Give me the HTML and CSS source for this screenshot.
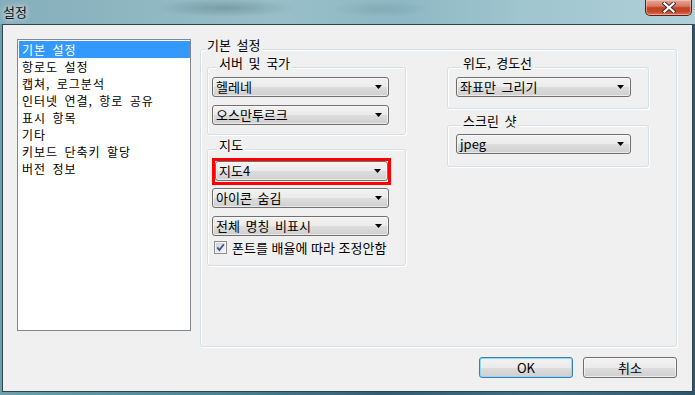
FILE: index.html
```html
<!DOCTYPE html>
<html lang="ko">
<head>
<meta charset="utf-8">
<title>설정</title>
<link rel="stylesheet" href="styles.css">
</head>
<body>
<div class="window">
  <div class="titlebar">
    <span class="title">설정</span>
    <div class="close-btn">
      <svg width="14" height="11" viewBox="0 0 14 11">
        <path d="M2.5 1.5 L11.5 9.5 M11.5 1.5 L2.5 9.5" stroke="#3a2a2a" stroke-width="4" stroke-linecap="square" fill="none"/>
        <path d="M2.5 1.5 L11.5 9.5 M11.5 1.5 L2.5 9.5" stroke="#ffffff" stroke-width="2.2" stroke-linecap="square" fill="none"/>
      </svg>
    </div>
  </div>
  <div class="client">
    <div class="content">
      <ul class="listbox">
        <li class="selected">기본 설정</li>
        <li>항로도 설정</li>
        <li>캡쳐, 로그분석</li>
        <li>인터넷 연결, 항로 공유</li>
        <li>표시 항목</li>
        <li>기타</li>
        <li>키보드 단축키 할당</li>
        <li>버전 정보</li>
      </ul>
      <div class="group main-group">
        <div class="group-label main-label">기본 설정</div>
        <div class="columns">
          <div class="col col-left">
            <div class="group g-server">
              <div class="group-label">서버 및 국가</div>
              <div class="combo first"><span>헬레네</span><svg class="arrow" width="7" height="4" viewBox="0 0 7 4"><polygon points="0,0 7,0 3.5,4" fill="#000"/></svg></div>
              <div class="combo"><span>오스만투르크</span><svg class="arrow" width="7" height="4" viewBox="0 0 7 4"><polygon points="0,0 7,0 3.5,4" fill="#000"/></svg></div>
            </div>
            <div class="group g-map">
              <div class="group-label">지도</div>
              <div class="highlight">
                <div class="combo"><span>지도4</span><svg class="arrow" width="7" height="4" viewBox="0 0 7 4"><polygon points="0,0 7,0 3.5,4" fill="#000"/></svg></div>
              </div>
              <div class="combo after-hl"><span>아이콘 숨김</span><svg class="arrow" width="7" height="4" viewBox="0 0 7 4"><polygon points="0,0 7,0 3.5,4" fill="#000"/></svg></div>
              <div class="combo"><span>전체 명칭 비표시</span><svg class="arrow" width="7" height="4" viewBox="0 0 7 4"><polygon points="0,0 7,0 3.5,4" fill="#000"/></svg></div>
              <div class="check-row">
                <span class="checkbox">
                  <svg width="11" height="11" viewBox="0 0 11 11"><path d="M2.3 5.4 L4.4 8 L8.8 2.2" stroke="#3d5396" stroke-width="1.8" fill="none"/></svg>
                </span>
                <span class="check-label">폰트를 배율에 따라 조정안함</span>
              </div>
            </div>
          </div>
          <div class="col col-right">
            <div class="group g-grid">
              <div class="group-label">위도, 경도선</div>
              <div class="combo first"><span>좌표만 그리기</span><svg class="arrow" width="7" height="4" viewBox="0 0 7 4"><polygon points="0,0 7,0 3.5,4" fill="#000"/></svg></div>
            </div>
            <div class="group g-shot">
              <div class="group-label">스크린 샷</div>
              <div class="combo first"><span>jpeg</span><svg class="arrow" width="7" height="4" viewBox="0 0 7 4"><polygon points="0,0 7,0 3.5,4" fill="#000"/></svg></div>
            </div>
          </div>
        </div>
      </div>
    </div>
    <div class="buttons">
      <div class="btn default">OK</div>
      <div class="btn">취소</div>
    </div>
  </div>
</div>
</body>
</html>
```

FILE: styles.css
```css
* {
  box-sizing: border-box;
  margin: 0;
  padding: 0;
}

body {
  width: 695px;
  height: 395px;
  overflow: hidden;
  font-family: "Noto Sans CJK KR", "Noto Sans", sans-serif;
  font-size: 13px;
  word-spacing: 2px;
  color: #000;
  background: #4f8596;
}

.window {
  width: 695px;
  height: 395px;
  background: linear-gradient(90deg, #6aa1ad 0%, #4d8498 30%, #2f5f78 55%, #3d7088 80%, #2a5670 100%);
}

.titlebar {
  height: 24px;
  display: flex;
  justify-content: space-between;
  align-items: flex-start;
  background:
    radial-gradient(ellipse 70px 9px at 225px 8px, rgba(70, 100, 110, 0.35), rgba(70, 100, 110, 0)),
    radial-gradient(ellipse 50px 8px at 380px 9px, rgba(80, 110, 120, 0.2), rgba(80, 110, 120, 0)),
    linear-gradient(90deg, #84aebb 0%, #8fb7c2 20%, #98bfc9 40%, #8eb8c4 58%, #9fc5ce 75%, #afd0d8 100%);
}

.title {
  padding: 3px 0 0 3px;
  font-size: 13px;
  line-height: 17px;
  color: #111;
  text-shadow: 0 0 5px rgba(255, 255, 255, 0.9), 0 0 9px rgba(255, 255, 255, 0.6);
}

.close-btn {
  width: 47px;
  height: 16px;
  margin-right: 3px;
  border: 1px solid #5a2118;
  border-top: none;
  border-radius: 0 0 5px 5px;
  background: linear-gradient(180deg, #e6a796 0%, #d67c66 40%, #c04425 52%, #c9472a 80%, #e0805f 100%);
  box-shadow: inset 0 0 0 1px rgba(255, 220, 210, 0.45);
  display: flex;
  align-items: center;
  justify-content: center;
}

.client {
  margin-left: 2px;
  width: 691px;
  height: 368px;
  border: 1px solid #34444d;
  background: #f0f0f0;
}

.content {
  display: flex;
  align-items: flex-start;
  padding: 14px 0 0 14px;
}

.listbox {
  list-style: none;
  width: 174px;
  height: 292px;
  border: 1px solid #828790;
  background: #fff;
  padding: 1px 0 1px 1px;
  font-size: 12px;
  letter-spacing: 1px;
  word-spacing: 2px;
}

.listbox li {
  height: 17px;
  line-height: 17px;
  padding-left: 3px;
  white-space: nowrap;
}

.listbox li.selected {
  background: #3399ff;
  color: #fff;
}

.group {
  border: 1px solid #d5dfe5;
  border-radius: 3px;
  box-shadow: inset 1px 1px 0 #fff, 1px 1px 0 #fff;
}

.group-label {
  width: fit-content;
  height: 14px;
  line-height: 14px;
  margin-top: -12px;
  margin-left: 5px;
  padding: 0 2px;
  background: #f0f0f0;
  white-space: nowrap;
}

.main-group {
  margin-left: 9px;
  margin-top: 10px;
  width: 477px;
  height: 298px;
}

.main-label {
  margin-left: 4px;
}

.columns {
  display: flex;
  align-items: flex-start;
  padding-left: 6px;
  margin-top: 15px;
}

.col-left {
  width: 199px;
}

.col-right {
  width: 202px;
  margin-left: 41px;
}

.g-server {
  height: 68px;
  padding-left: 4px;
}

.g-map {
  height: 117px;
  margin-top: 14px;
  padding-left: 4px;
}

.g-grid {
  height: 42px;
  padding-left: 8px;
}

.g-shot {
  height: 42px;
  margin-top: 16px;
  padding-left: 8px;
}

.combo {
  display: flex;
  align-items: center;
  justify-content: space-between;
  width: 177px;
  height: 20px;
  margin-top: 8px;
  padding: 0 6px 0 3px;
  border: 1px solid #707070;
  border-radius: 3px;
  background: linear-gradient(180deg, #f2f2f2 0%, #ebebeb 50%, #dddddd 51%, #cfcfcf 100%);
  box-shadow: inset 0 0 0 1px rgba(255, 255, 255, 0.55);
  white-space: nowrap;
  line-height: 18px;
}

.combo.first {
  margin-top: 7px;
}

.g-grid .combo,
.g-shot .combo {
  width: 175px;
}

.g-shot .combo.first {
  margin-top: 6px;
}

.highlight {
  width: 179px;
  height: 27px;
  margin-top: 6px;
  border: 3px solid #ff0000;
}

.highlight .combo {
  width: 173px;
  margin-top: 0;
  margin-left: 0;
}

.combo.after-hl {
  margin-top: 3px;
}

.arrow {
  flex: none;
}

.check-row {
  display: flex;
  align-items: center;
  height: 15px;
  margin-top: 4px;
  padding-left: 2px;
}

.checkbox {
  flex: none;
  width: 13px;
  height: 13px;
  border: 1px solid #8e8f8f;
  background: linear-gradient(135deg, #c9cdd3 0%, #e9eaec 60%, #f7f7f7 100%);
  box-shadow: inset 0 0 0 1px #f4f4f4;
  display: flex;
  align-items: center;
  justify-content: center;
}

.check-label {
  margin-left: 5px;
  white-space: nowrap;
  line-height: 15px;
  word-spacing: 0;
}

.buttons {
  display: flex;
  justify-content: flex-end;
  gap: 10px;
  padding-right: 15px;
  margin-top: 10px;
}

.btn {
  width: 94px;
  height: 21px;
  line-height: 19px;
  text-align: center;
  border: 1px solid #707070;
  border-radius: 3px;
  background: linear-gradient(180deg, #f2f2f2 0%, #ebebeb 50%, #dddddd 51%, #cfcfcf 100%);
  box-shadow: inset 0 0 0 1px rgba(255, 255, 255, 0.6);
}

.btn.default {
  border-color: #3c7fb1;
  box-shadow: inset 0 0 0 1px #8fd9f6;
}
```
